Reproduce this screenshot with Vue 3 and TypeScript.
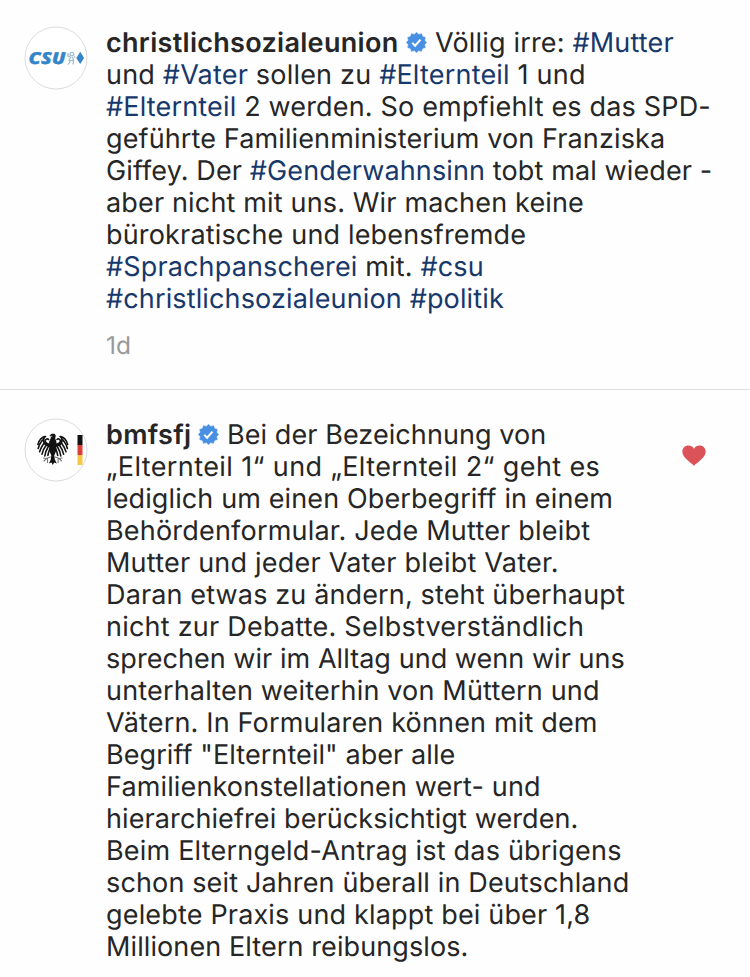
<script setup lang="ts">
interface Segment {
  text: string
  kind?: 'tag' | 'user' | 'badge'
}
interface Line {
  segments: Segment[]
  spacing: number
}

const tag = (text: string): Segment => ({ text, kind: 'tag' })
const user = (text: string): Segment => ({ text, kind: 'user' })
const badge: Segment = { text: '', kind: 'badge' }
const line = (spacing: number, ...parts: (string | Segment)[]): Line => ({
  spacing,
  segments: parts.map((p) => (typeof p === 'string' ? { text: p } : p)),
})

const caption: Line[] = [
  line(0.18, user('christlichsozialeunion'), badge, 'Völlig irre: ', tag('#Mutter')),
  line(0.2, 'und ', tag('#Vater'), ' sollen zu ', tag('#Elternteil'), ' 1 und'),
  line(0.17, tag('#Elternteil'), ' 2 werden. So empfiehlt es das SPD-'),
  line(0.12, 'geführte Familienministerium von Franziska'),
  line(0.12, 'Giffey. Der ', tag('#Genderwahnsinn'), ' tobt mal wieder -'),
  line(0.16, 'aber nicht mit uns. Wir machen keine'),
  line(0.17, 'bürokratische und lebensfremde'),
  line(0.15, tag('#Sprachpanscherei'), ' mit. ', tag('#csu')),
  line(0.14, tag('#christlichsozialeunion'), ' ', tag('#politik')),
]

const reply: Line[] = [
  line(0.08, user('bmfsfj'), badge, 'Bei der Bezeichnung von'),
  line(0.4, '„Elternteil 1“ und „Elternteil 2“ geht es'),
  line(0.12, 'lediglich um einen Oberbegriff in einem'),
  line(0.2, 'Behördenformular. Jede Mutter bleibt'),
  line(0.22, 'Mutter und jeder Vater bleibt Vater.'),
  line(0.14, 'Daran etwas zu ändern, steht überhaupt'),
  line(0.23, 'nicht zur Debatte. Selbstverständlich'),
  line(0.05, 'sprechen wir im Alltag und wenn wir uns'),
  line(0.17, 'unterhalten weiterhin von Müttern und'),
  line(0.16, 'Vätern. In Formularen können mit dem'),
  line(0.08, 'Begriff "Elternteil" aber alle'),
  line(0.14, 'Familienkonstellationen wert- und'),
  line(0.1, 'hierarchiefrei berücksichtigt werden.'),
  line(0.2, 'Beim Elterngeld-Antrag ist das übrigens'),
  line(0.14, 'schon seit Jahren überall in Deutschland'),
  line(0.17, 'gelebte Praxis und klappt bei über 1,8'),
  line(0.1, 'Millionen Eltern reibungslos.'),
]

const posts = [
  { id: 'csu', lines: caption, age: '1d', liked: false },
  { id: 'bmfsfj', lines: reply, age: '', liked: true },
]

// Twelve-pointed rosette of the verified badge
const rosette = Array.from({ length: 24 }, (_, i) => {
  const r = i % 2 ? 8.4 : 10.1
  const a = (i * Math.PI) / 12
  return `${(10.5 + r * Math.sin(a)).toFixed(2)},${(10.5 - r * Math.cos(a)).toFixed(2)}`
}).join(' ')

// The eagle's wing is drawn once and mirrored about its body axis
const wings = ['', 'matrix(-1 0 0 1 57.6 0)']
</script>

<template>
  <main class="thread">
    <article v-for="post in posts" :key="post.id" class="comment" :class="post.id">
      <div class="avatar">
        <svg v-if="post.id === 'csu'" viewBox="0 0 64 64" width="64" height="64">
          <circle cx="32" cy="32" r="31" fill="#fff" stroke="#dcdcdc" />
          <text x="4.500" y="38" class="party" textLength="37" lengthAdjust="spacingAndGlyphs">CSU</text>
          <g fill="none" stroke="#9fb9cf" stroke-width="1.2">
            <path d="M46.500 26.500h2.500l1 2-2 1.500-2-1zM44 27v3l2.500 1M47 31l-2 3 1 2-2 2.500M48.500 31l1 3.500-.500 4M46 34.500l3 0M50 30.500l1.500 1" />
          </g>
          <path d="M56.200 25.700l3.900 6.200-3.900 6.200-3.900-6.200z" fill="#3585c9" />
        </svg>
        <svg v-else viewBox="0 0 64 64" width="64" height="64">
          <circle cx="32" cy="32" r="31" fill="#fff" stroke="#dcdcdc" />
          <path d="M25.500 17.500l2-1.700h3l1.300 1.700-.600 3 1.300 3.500-.400 9-1.800 4.500.500 4 2 4-2.600-1-1.400 2.500-1.400-2.500-2.600 1 2-4 .500-4-1.800-4.500-.400-9 1.500-3.500.400-2z" fill="#111" />
          <g v-for="m in wings" :key="m" :transform="m" fill="none" stroke="#111" stroke-linecap="round">
            <path d="M26.500 26.500c-3-.200-6-1.800-5.200-4.200.500-1.500 2.200-1.700 3.200-.900M21.500 18.500c-4 .500-6.500 4-7.500 8" stroke-width="1.700" />
            <path d="M20.500 18.800c-1.500 2.500-1 6 1.500 8l4.500 1.200" stroke-width="2" />
            <path d="M18.500 22c-2 2.500-3.500 5-4.300 8.500M19.800 25.500c-1.800 2.500-3.300 5-4.200 8.300M22 27.500c-2 2.600-3.300 5.200-4 8.700M24.300 28.500c-1.800 3-3 6-3.500 9.500M26.500 29c-1.200 3-2.300 6-2.600 8.500" stroke-width="1.600" />
            <path d="M26.500 39l-4.500 1.500-2.500-.500M22.500 40.500l-2.500 2.500M23.500 40.500l0 4" stroke="#777" stroke-width="1.100" />
          </g>
          <path d="M25.800 18.300h2.600" fill="none" stroke="#aaa" stroke-width="1" />
          <path d="M53.500 17h5v10h-5z" fill="#111" />
          <path d="M53.500 27h5v10h-5z" fill="#d9403c" />
          <path d="M53.500 37h5v10h-5z" fill="#f6c746" />
        </svg>
      </div>
      <div class="body">
        <p class="text">
          <span v-for="(l, i) in post.lines" :key="i" class="line" :style="{ letterSpacing: l.spacing + 'px' }"><template v-for="(s, j) in l.segments" :key="j"><svg v-if="s.kind === 'badge'" class="badge" viewBox="0 0 21 21" width="21" height="21"><polygon :points="rosette" fill="#4a90e2" stroke="#4a90e2" stroke-linejoin="round" stroke-width=".6" /><path d="M6.300 10.900l2.800 2.800 5.400-6" fill="none" stroke="#fff" stroke-width="2" /></svg><span v-else :class="s.kind">{{ s.text }}</span></template></span>
        </p>
        <time v-if="post.age" class="age">{{ post.age }}</time>
      </div>
      <svg v-if="post.liked" class="heart" viewBox="0 0 24 21" width="24" height="21">
        <path d="M12 20.700C8.500 17.500.3 12.200.3 6.800.3 3 3 .5 6.300.5c2.400 0 4.500 1.200 5.700 3.200C13.200 1.700 15.300.5 17.700.5c3.300 0 6 2.500 6 6.300 0 5.400-8.200 10.700-11.700 13.900z" fill="#db5259" />
      </svg>
    </article>
  </main>
</template>

<style>
body {
  margin: 0;
  background: #fff;
}
</style>

<style scoped>
.thread {
  box-sizing: border-box;
  width: 750px;
  height: 977px;
  overflow: hidden;
  background: #fefefe;
  color: #262626;
  font-family: Inter, 'Liberation Sans', sans-serif;
  font-size: 27px;
  line-height: 32px;
  text-rendering: geometricPrecision;
}
.comment {
  display: flex;
  align-items: flex-start;
  box-sizing: border-box;
  padding: 26px 0 0 24px;
}
.csu {
  height: 390px;
  border-bottom: 1px solid #dcdddd;
}
.bmfsfj {
  padding-top: 28px;
}
.avatar {
  width: 64px;
  height: 64px;
  flex: none;
}
.body {
  width: 570px;
  margin-left: 18px;
  padding-top: 1px;
  flex: none;
}
.text {
  margin: 0;
}
.line {
  display: block;
  white-space: pre;
}
.tag {
  color: #17386b;
}
.user {
  font-weight: 600;
  letter-spacing: 0.3px;
}
.badge {
  margin: 0 8px 0 7.5px;
  vertical-align: -1px;
}
.bmfsfj .badge {
  margin-left: 6.5px;
}
.age {
  display: block;
  margin-top: 14px;
  color: #999;
  font-size: 24.5px;
}
.heart {
  margin: 27px 0 0 6px;
  flex: none;
}
.party {
  fill: #3585c9;
  stroke: #3585c9;
  stroke-width: 0.3px;
  font: italic 800 16.5px 'Open Sans', sans-serif;
}
</style>
